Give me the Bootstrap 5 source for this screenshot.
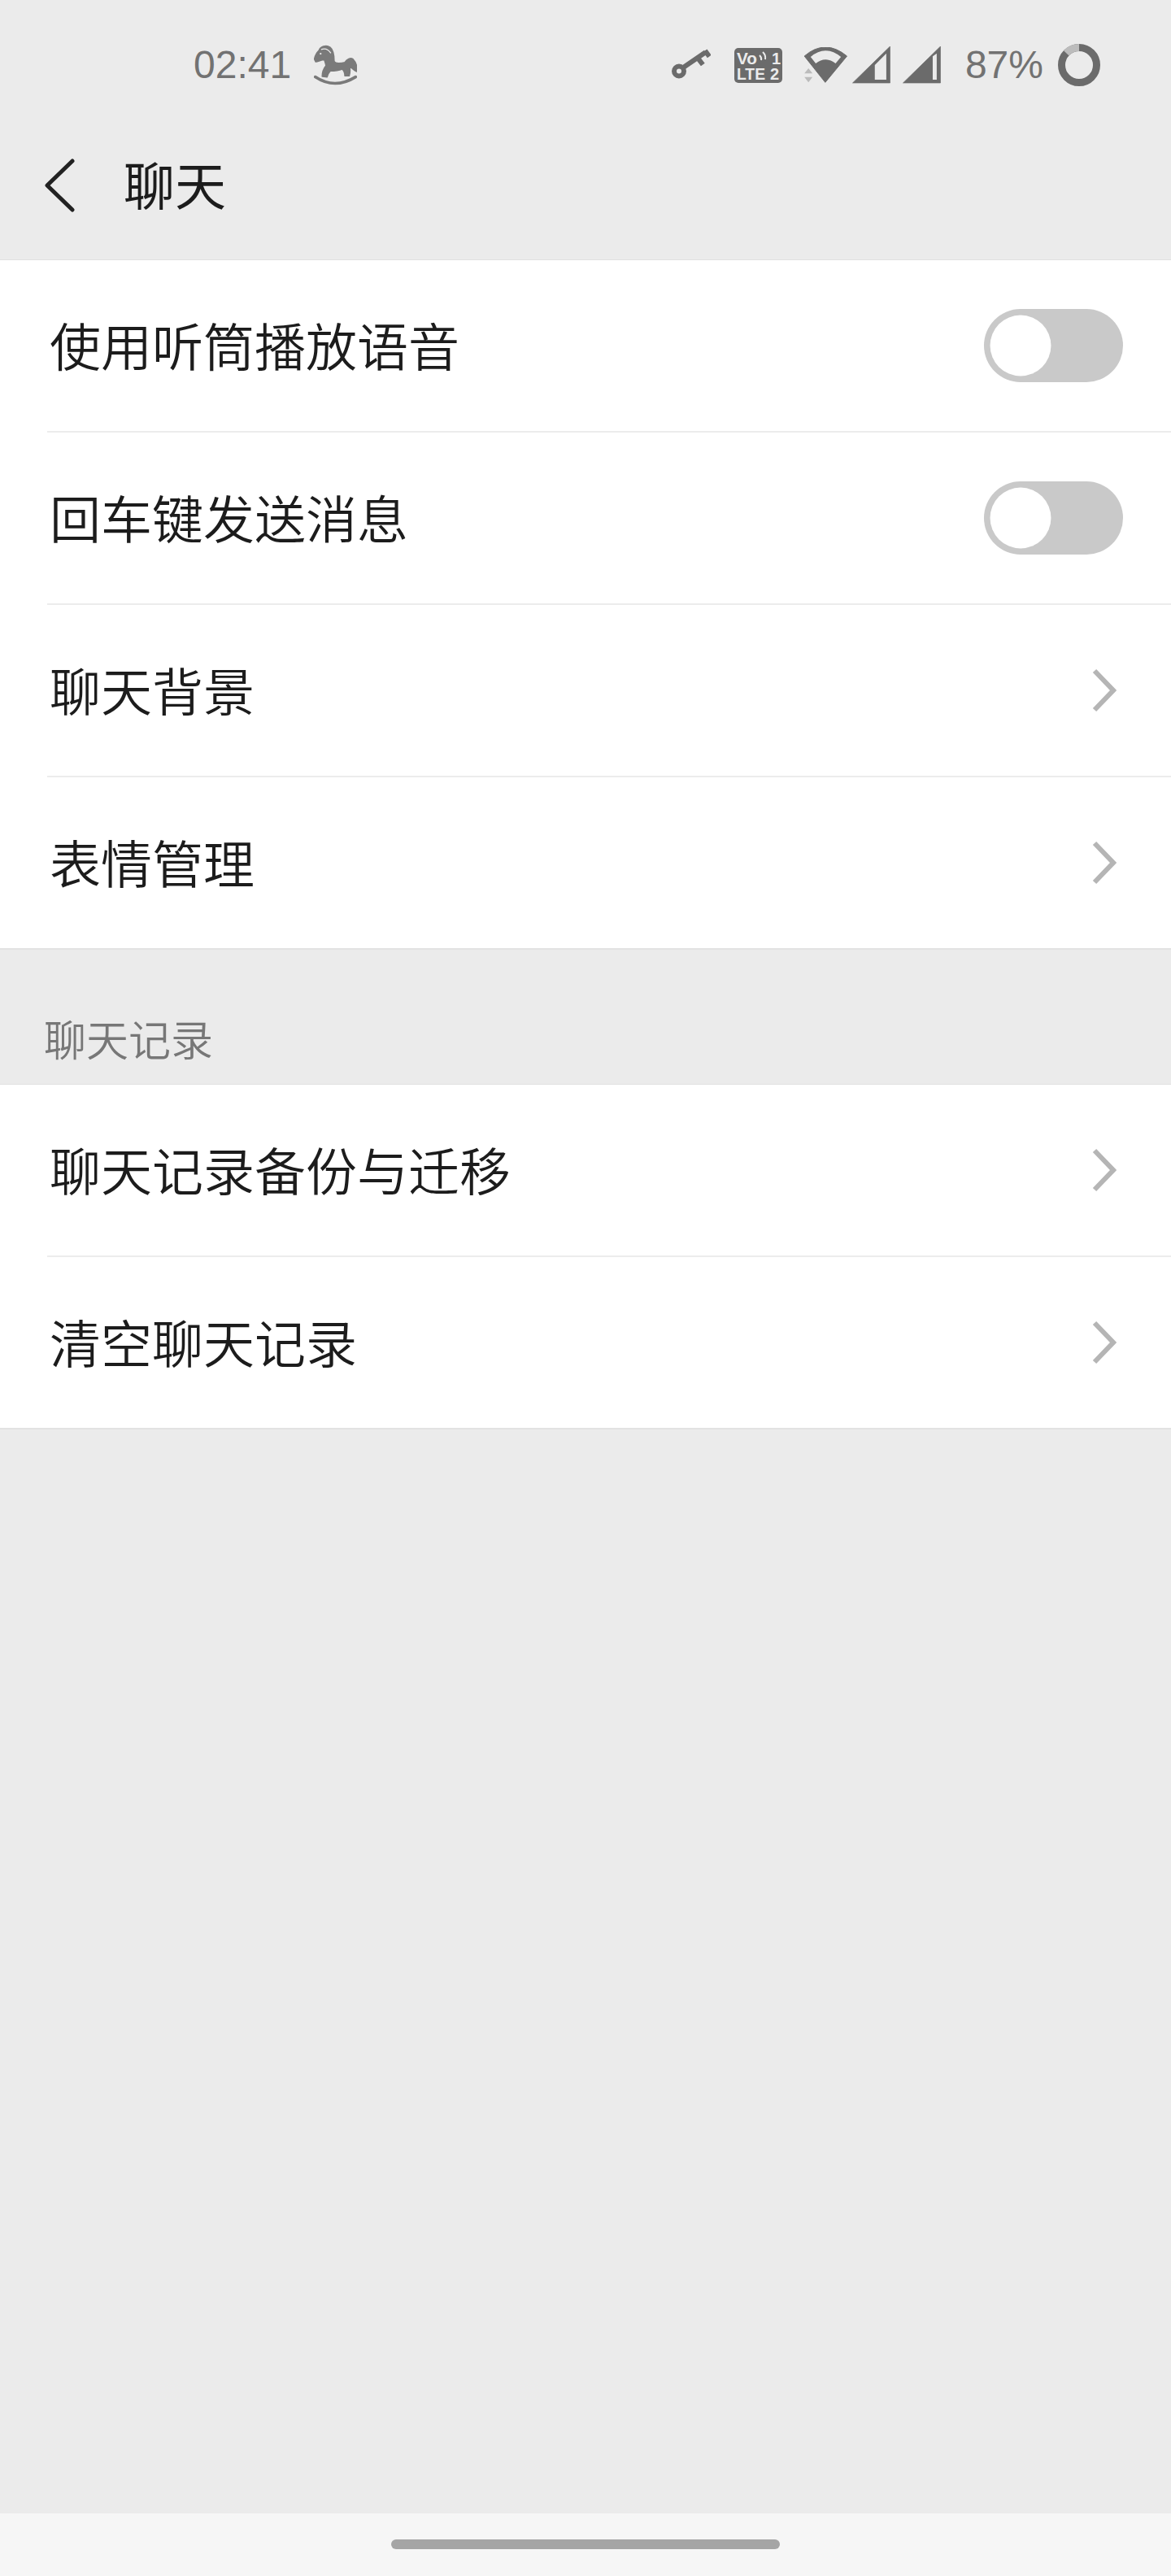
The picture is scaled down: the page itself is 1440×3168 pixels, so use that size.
<!DOCTYPE html>
<html lang="zh-CN">
<head>
  <meta charset="UTF-8">
  <title>聊天</title>
  <link href="https://cdn.jsdelivr.net/npm/bootstrap@5.3.0/dist/css/bootstrap.min.css" rel="stylesheet">
  <style>
    body {
      background: #ebebeb;
      font-family: "Noto Sans CJK SC", "Liberation Sans", sans-serif;
      color: #1c1c1c;
    }
    .status-row { height: 160px; padding-left: 238px; color: #727272; font-family: "Liberation Sans", sans-serif; font-size: 48px; line-height: 1; }
    .status-time { margin-right: 28px; }
    .status-right { margin-left: auto; padding-right: 87px; }
    .status-key { margin-right: 29px; }
    .status-volte { margin-right: 27px; }
    .status-wifi { margin-right: 6px; }
    .status-sig1 { margin-right: 15px; }
    .status-pct { margin-left: 30px; margin-right: 18px; }
    .title-row { height: 160px; padding-bottom: 24px; padding-left: 54px; border-bottom: 1px solid #e0e0e0; }
    .title-text { font-size: 63px; line-height: 1; margin-left: 58px; margin-bottom: 6px; font-weight: 400; }
    .setting-group { background: #fff; border-bottom: 2px solid #e2e2e2; border-radius: 0; }
    .setting-item {
      height: 212px;
      margin-left: 58px;
      padding: 0 59px 0 3px;
      font-size: 63px;
      font-weight: 350;
      line-height: 1;
      color: #1c1c1c;
      background: transparent;
      border-color: #ececec;
      border-width: 0 0 2px;
    }
    .setting-item:last-child { height: 210px; border-bottom-width: 0; }
    .setting-text { margin-bottom: 6px; }
    .section-label { height: 166px; padding: 0 0 30px 54px; font-size: 52px; font-weight: 350; line-height: 1; color: #777; border-bottom: 1px solid #e2e2e2; }
    .form-switch.switch-wrap { padding: 0; margin: 0; min-height: 0; }
    .form-switch.switch-wrap .form-check-input {
      width: 171px;
      height: 90px;
      margin: 0;
      float: none;
      display: block;
      border: 0;
      box-shadow: none;
      background-color: #c9c9c9;
      background-position: left center;
      background-image: url("data:image/svg+xml,%3csvg xmlns='http://www.w3.org/2000/svg' viewBox='-4 -4 8 8'%3e%3ccircle r='3.33' fill='%23fff'/%3e%3c/svg%3e");
    }
    .chevron-next { margin-right: 8px; }
    .home-bar { height: 77px; background: #f6f6f6; }
    .home-handle { width: 478px; height: 12px; margin-top: -1px; background: #a5a5a5; border-radius: 6px; }
    .volte-text { font-family: "Liberation Sans", sans-serif; font-weight: 700; fill: #ebebeb; }
  </style>
</head>
<body class="d-flex flex-column min-vh-100">

<!-- status bar -->
<div class="status-row d-flex align-items-center">
  <span class="status-time">02:41</span>
  <svg width="53" height="50" viewBox="495 35 160 150" fill="#7a7a7a" stroke="#7a7a7a" stroke-width="5" stroke-linejoin="round">
    <path d="M497 88 C500 72 508 62 514 56 C518 42 540 34 555 44 C568 54 570 74 570 96 C575 106 596 104 610 100 C618 88 630 82 640 88 C650 98 656 116 654 134 C644 130 634 120 626 112 C630 124 630 136 626 150 L610 150 C610 140 606 130 600 125 C588 130 570 132 556 132 C550 138 546 146 544 154 L526 152 C526 138 530 124 540 112 C538 102 536 96 534 90 C524 90 512 96 502 98 Z"/>
    <path d="M500 154 Q572 202 650 154" fill="none" stroke-width="11" stroke-linecap="round"/>
    <path d="M522 52 Q544 44 558 66" fill="none" stroke="#ebebeb" stroke-width="4"/>
    <circle cx="520" cy="68" r="3.5" fill="#ebebeb" stroke="none"/>
  </svg>
  <div class="status-right d-flex align-items-center">
    <svg class="status-key" width="48" height="43" viewBox="45 45 144 128" fill="none" stroke="#6b6b6b">
      <circle cx="72" cy="130" r="18" stroke-width="18"/>
      <path d="M90 115 L170 60 M168 54 L184 76 M140 80 L160 106" stroke-width="18"/>
    </svg>
    <svg class="status-volte" width="59" height="43" viewBox="0 0 59 43">
      <rect width="59" height="43" rx="5" fill="#6b6b6b"/>
      <text class="volte-text" x="3" y="20" font-size="20" textLength="25" lengthAdjust="spacingAndGlyphs">Vo</text>
      <path d="M31 9 q3 3 2 6 M35 5 q4 4 3 9" fill="none" stroke="#ebebeb" stroke-width="2"/>
      <text class="volte-text" x="46" y="20" font-size="20">1</text>
      <text class="volte-text" x="3" y="39" font-size="20" textLength="35" lengthAdjust="spacingAndGlyphs">LTE</text>
      <text class="volte-text" x="44" y="39" font-size="20">2</text>
    </svg>
    <svg class="status-wifi" width="53" height="44" viewBox="55 42 158 132">
      <path d="M132 172 L55 75 Q132 9 212 75 Z" fill="#6b6b6b" stroke="#6b6b6b" stroke-linejoin="round" stroke-width="3"/>
      <path d="M78 78 Q132 32 190 78 L170 102 Q132 74 97 102 Z" fill="#ebebeb"/>
      <path d="M55 172 L55 128 L97 172 Z" fill="#ebebeb"/>
      <path d="M70 120 L55 139 L85 139 Z M55 152 L85 152 L70 172 Z" fill="#bbb"/>
    </svg>
    <svg class="status-sig1" width="47" height="46" viewBox="232 35 140 140">
      <path d="M232 172 L372 35 L372 172 Z" fill="#6b6b6b" stroke="#6b6b6b" stroke-linejoin="round" stroke-width="2"/>
      <path d="M315 105 L358 62 L358 160 L315 160 Z" fill="#ebebeb"/>
    </svg>
    <svg width="47" height="46" viewBox="232 35 140 140">
      <path d="M232 172 L372 35 L372 172 Z" fill="#6b6b6b" stroke="#6b6b6b" stroke-linejoin="round" stroke-width="2"/>
      <path d="M343 72 L358 62 L358 160 L343 160 Z" fill="#ebebeb"/>
    </svg>
    <span class="status-pct">87%</span>
    <svg width="52" height="52" viewBox="0 0 52 52" fill="none" stroke-width="9">
      <circle cx="26" cy="26" r="21.5" stroke="#6b6b6b"/>
      <path d="M26 4.5 A21.5 21.5 0 0 0 10.3 11.3" stroke="#bcbcbc"/>
    </svg>
  </div>
</div>

<!-- title -->
<div class="title-row d-flex align-items-center">
  <svg width="40" height="66" viewBox="0 0 40 66" fill="none" stroke="#222" stroke-width="5" stroke-linecap="round" stroke-linejoin="round">
    <path d="M35 3 L4 33 L35 63"/>
  </svg>
  <span class="title-text">聊天</span>
</div>

<div class="list-group setting-group">
  <div class="list-group-item setting-item d-flex justify-content-between align-items-center">
    <span class="setting-text">使用听筒播放语音</span>
    <div class="form-check form-switch switch-wrap"><input class="form-check-input" type="checkbox" role="switch" aria-label="使用听筒播放语音"></div>
  </div>
  <div class="list-group-item setting-item d-flex justify-content-between align-items-center">
    <span class="setting-text">回车键发送消息</span>
    <div class="form-check form-switch switch-wrap"><input class="form-check-input" type="checkbox" role="switch" aria-label="回车键发送消息"></div>
  </div>
  <div class="list-group-item setting-item d-flex justify-content-between align-items-center">
    <span class="setting-text">聊天背景</span>
    <svg class="chevron-next" width="30" height="54" viewBox="0 0 30 54" fill="none" stroke="#b5b5b5" stroke-width="6"><path d="M3 3 L26 27 L3 51"/></svg>
  </div>
  <div class="list-group-item setting-item d-flex justify-content-between align-items-center">
    <span class="setting-text">表情管理</span>
    <svg class="chevron-next" width="30" height="54" viewBox="0 0 30 54" fill="none" stroke="#b5b5b5" stroke-width="6"><path d="M3 3 L26 27 L3 51"/></svg>
  </div>
</div>

<div class="section-label d-flex align-items-end">聊天记录</div>

<div class="list-group setting-group">
  <div class="list-group-item setting-item d-flex justify-content-between align-items-center">
    <span class="setting-text">聊天记录备份与迁移</span>
    <svg class="chevron-next" width="30" height="54" viewBox="0 0 30 54" fill="none" stroke="#b5b5b5" stroke-width="6"><path d="M3 3 L26 27 L3 51"/></svg>
  </div>
  <div class="list-group-item setting-item d-flex justify-content-between align-items-center">
    <span class="setting-text">清空聊天记录</span>
    <svg class="chevron-next" width="30" height="54" viewBox="0 0 30 54" fill="none" stroke="#b5b5b5" stroke-width="6"><path d="M3 3 L26 27 L3 51"/></svg>
  </div>
</div>

<div class="flex-grow-1"></div>

<div class="home-bar d-flex justify-content-center align-items-center">
  <div class="home-handle"></div>
</div>

<script src="https://cdn.jsdelivr.net/npm/bootstrap@5.3.0/dist/js/bootstrap.bundle.min.js"></script>
</body>
</html>
